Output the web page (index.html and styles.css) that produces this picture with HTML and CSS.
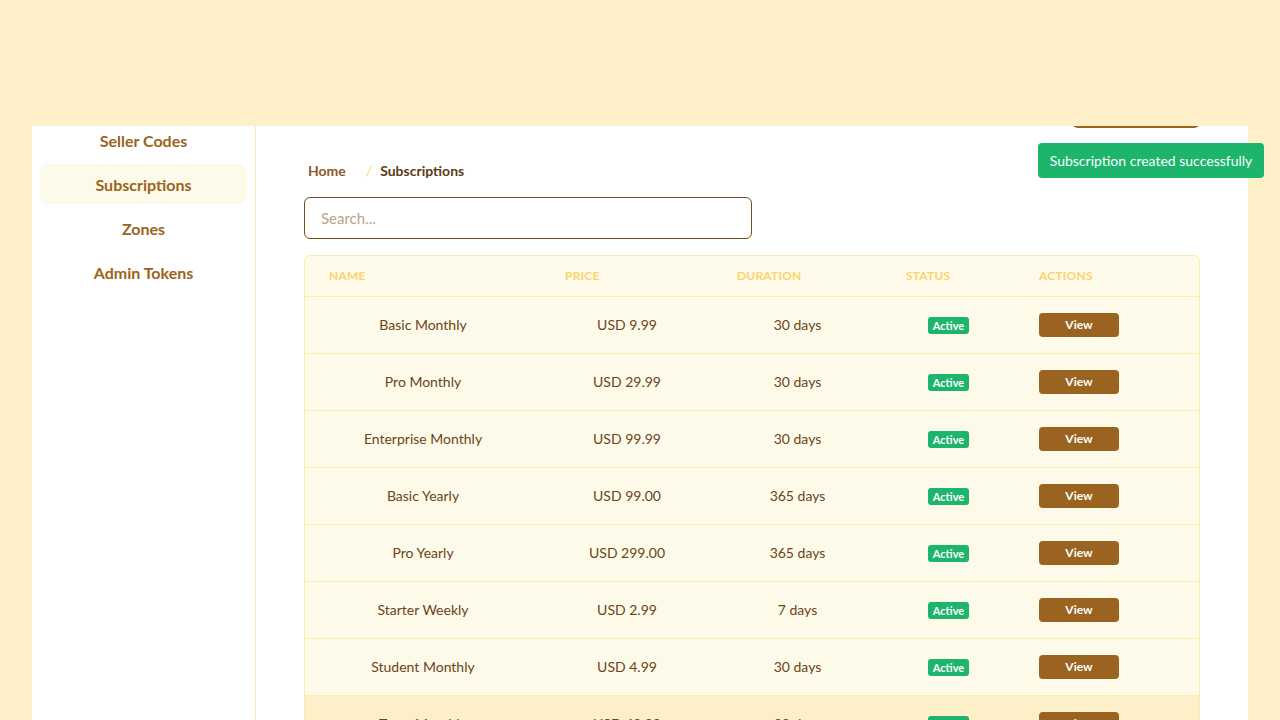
FILE: index.html
```html
<!DOCTYPE html>
<html lang="en">
<head>
<meta charset="utf-8">
<title>Subscriptions</title>
<link rel="stylesheet" href="styles.css">
</head>
<body>
<header class="topbar"></header>

<div class="toast">Subscription created successfully</div>

<div class="shell">
  <aside class="sidebar">
    <nav class="nav">
      <a class="nav-item" href="#">Sellers</a>
      <a class="nav-item" href="#">Seller Codes</a>
      <a class="nav-item active" href="#">Subscriptions</a>
      <a class="nav-item" href="#">Zones</a>
      <a class="nav-item" href="#">Admin Tokens</a>
    </nav>
  </aside>

  <main class="main">
    <div class="page-actions">
      <button class="btn-create">Create Subscription</button>
    </div>

    <div class="breadcrumb">
      <a class="crumb-link" href="#">Home</a>
      <span class="crumb-sep">/</span>
      <span class="crumb-current">Subscriptions</span>
    </div>

    <input class="search" type="text" placeholder="Search...">

    <div class="table-wrap">
      <table class="table">
        <thead>
          <tr>
            <th class="c-name">Name</th>
            <th class="c-price">Price</th>
            <th class="c-dur">Duration</th>
            <th class="c-status">Status</th>
            <th class="c-actions">Actions</th>
          </tr>
        </thead>
        <tbody>
          <tr><td>Basic Monthly</td><td>USD 9.99</td><td>30 days</td><td><span class="badge">Active</span></td><td class="act"><button class="btn-view">View</button></td></tr>
          <tr><td>Pro Monthly</td><td>USD 29.99</td><td>30 days</td><td><span class="badge">Active</span></td><td class="act"><button class="btn-view">View</button></td></tr>
          <tr><td>Enterprise Monthly</td><td>USD 99.99</td><td>30 days</td><td><span class="badge">Active</span></td><td class="act"><button class="btn-view">View</button></td></tr>
          <tr><td>Basic Yearly</td><td>USD 99.00</td><td>365 days</td><td><span class="badge">Active</span></td><td class="act"><button class="btn-view">View</button></td></tr>
          <tr><td>Pro Yearly</td><td>USD 299.00</td><td>365 days</td><td><span class="badge">Active</span></td><td class="act"><button class="btn-view">View</button></td></tr>
          <tr><td>Starter Weekly</td><td>USD 2.99</td><td>7 days</td><td><span class="badge">Active</span></td><td class="act"><button class="btn-view">View</button></td></tr>
          <tr><td>Student Monthly</td><td>USD 4.99</td><td>30 days</td><td><span class="badge">Active</span></td><td class="act"><button class="btn-view">View</button></td></tr>
          <tr class="hover"><td>Team Monthly</td><td>USD 49.99</td><td>30 days</td><td><span class="badge">Active</span></td><td class="act"><button class="btn-view">View</button></td></tr>
          <tr><td>Family Yearly</td><td>USD 149.00</td><td>365 days</td><td><span class="badge">Active</span></td><td class="act"><button class="btn-view">View</button></td></tr>
        </tbody>
      </table>
    </div>
  </main>
</div>
</body>
</html>
```

FILE: styles.css
```css
* { box-sizing: border-box; }

html, body {
  margin: 0;
  padding: 0;
}

body {
  background: #fdefc8;
  font-family: Lato, "Noto Sans", "Liberation Sans", sans-serif;
  color: #6b4420;
  height: 720px;
  overflow: hidden;
}

.topbar {
  position: fixed;
  top: 0;
  left: 0;
  right: 0;
  height: 126px;
  background: #fdefc8;
  z-index: 10;
}

.toast {
  position: fixed;
  top: 143px;
  right: 16px;
  width: 226px;
  height: 35px;
  background: #1db46c;
  color: #ffffff;
  font-size: 14px;
  border-radius: 4px;
  display: flex;
  align-items: center;
  justify-content: center;
  z-index: 20;
}

.shell {
  margin: 44px 32px 0;
  display: flex;
  background: #ffffff;
  min-height: 900px;
}

.sidebar {
  width: 224px;
  flex: none;
  border-right: 1px solid #fdeab0;
  padding: 32px 8px 0;
}

.nav {
  display: flex;
  flex-direction: column;
  gap: 4px;
}

.nav-item {
  height: 40px;
  display: flex;
  align-items: center;
  justify-content: center;
  border-radius: 6px;
  color: #9a6420;
  font-size: 16px;
  font-weight: 700;
  text-decoration: none;
}

.nav-item.active {
  background: #fefae9;
}

.main {
  flex: 1;
  padding: 48px 48px 0;
}

.page-actions {
  display: flex;
  justify-content: flex-end;
}

.btn-create {
  width: 128px;
  height: 36px;
  border: none;
  border-radius: 6px;
  background: #9a6420;
  color: #ffffff;
  font-family: inherit;
  font-size: 14px;
  font-weight: 700;
}

.breadcrumb {
  margin-top: 31px;
  padding-left: 4px;
  height: 22px;
  display: flex;
  align-items: center;
  font-size: 14px;
  font-weight: 700;
}

.crumb-link {
  color: #8a5a28;
  text-decoration: none;
}

.crumb-sep {
  color: #fcd46c;
  font-weight: 400;
  margin: 0 8px 0 20px;
}

.crumb-current {
  color: #5c3a16;
}

.search {
  display: block;
  margin-top: 16px;
  width: 448px;
  height: 42px;
  border: 1px solid #7a4e1a;
  border-radius: 6px;
  padding: 0 16px;
  font-family: inherit;
  font-size: 15px;
  color: #5c3a16;
  background: #ffffff;
  outline: none;
}

.search::placeholder {
  color: #b9a48a;
}

.table-wrap {
  margin-top: 16px;
  border: 1px solid #fdeab0;
  border-radius: 6px;
  overflow: hidden;
  background: #fefae9;
}

.table {
  width: 100%;
  border-collapse: collapse;
  table-layout: fixed;
}

.table th {
  height: 40px;
  text-align: left;
  padding: 0 24px;
  font-size: 12px;
  font-weight: 700;
  text-transform: uppercase;
  color: #fcd46c;
  letter-spacing: 0.2px;
  border-bottom: 1px solid #fdeab0;
}

.c-name { width: 236px; }
.c-price { width: 172px; }
.c-dur { width: 169px; }
.c-status { width: 133px; }

.table td {
  height: 57px;
  text-align: center;
  font-size: 14px;
  color: #6b4420;
  border-bottom: 1px solid #fdeab0;
  padding: 0;
}

.table td.act {
  text-align: left;
  padding-left: 24px;
}

.table tr.hover td {
  background: #fdefc8;
}

.badge {
  display: inline-block;
  background: #1db46c;
  color: #ffffff;
  font-size: 11px;
  font-weight: 700;
  line-height: 17px;
  padding: 0 5px;
  border-radius: 3px;
  vertical-align: middle;
}

.btn-view {
  width: 80px;
  height: 24px;
  border: none;
  border-radius: 4px;
  background: #9a6420;
  color: #ffffff;
  font-family: inherit;
  font-size: 12px;
  font-weight: 700;
  vertical-align: middle;
}
```
